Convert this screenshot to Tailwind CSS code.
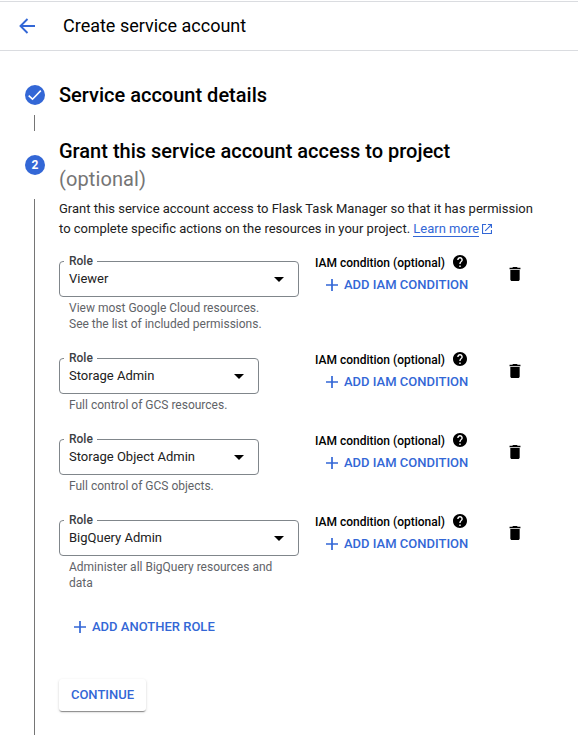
<!DOCTYPE html>
<html lang="en">
<head>
<meta charset="utf-8">
<title>Create service account</title>
<script src="https://cdn.jsdelivr.net/npm/@tailwindcss/browser@4"></script>
</head>
<body class="bg-white font-['Roboto',sans-serif] text-black">
<svg class="hidden">
  <symbol id="plus" viewBox="0 0 12 12"><path d="M6 0v12M0 6h12" stroke="currentColor" stroke-width="1.7" fill="none"/></symbol>
  <symbol id="help" viewBox="2 2 20 20"><path fill="currentColor" d="M12 2C6.48 2 2 6.48 2 12s4.48 10 10 10 10-4.480 10-10S17.520 2 12 2zm1 17h-2v-2h2v2zm2.070-7.750l-.9.920C13.450 12.900 13 13.500 13 15h-2v-.5c0-1.100.45-2.100 1.170-2.830l1.240-1.260c.37-.36.59-.86.59-1.410 0-1.100-.9-2-2-2s-2 .9-2 2H8c0-2.210 1.790-4 4-4s4 1.790 4 4c0 .88-.36 1.680-.93 2.250z"/></symbol>
  <symbol id="trash" viewBox="5 3 14 18"><path fill="currentColor" d="M6 19c0 1.100.9 2 2 2h8c1.100 0 2-.9 2-2V7H6v12zM19 4h-3.500l-1-1h-5l-1 1H5v2h14V4z"/></symbol>
  <symbol id="caret" viewBox="0 0 10 5"><path fill="currentColor" d="M0 0h10L5 5z"/></symbol>
</svg>
<div class="flex h-[739px] w-[578px] flex-col overflow-hidden">
  <header class="mt-px flex h-[50px] shrink-0 items-center border-y border-[#dadce0] pl-[19px]">
    <svg class="h-4 w-4 text-[#3367d6]" viewBox="0 0 16 16" fill="none" stroke="currentColor" stroke-width="1.900"><path d="M16 8H2M8.500 1L1.500 8l7 7"/></svg>
    <h1 class="ml-[28px] text-[18px] leading-6 whitespace-nowrap">Create service account</h1>
  </header>
  <main class="flex grow">
    <div class="ml-[25px] flex w-5 shrink-0 flex-col items-center pt-[34px]">
      <svg class="h-5 w-5 shrink-0" viewBox="0 0 20 20"><circle cx="10" cy="10" r="10" fill="#3367d6"/><path d="M3.700 10.700l3.800 3.500 8.300-8.600" fill="none" stroke="#fff" stroke-width="1.600"/></svg>
      <div class="mt-[10px] mr-px h-4 w-px bg-[#757575]"></div>
      <div class="mt-6 flex h-5 w-5 shrink-0 items-center justify-center rounded-full bg-[#3367d6] text-[12px] font-bold text-white">2</div>
      <div class="mt-6 mr-px h-[536px] w-px shrink-0 bg-[#757575]"></div>
    </div>
    <div class="ml-[14px] flex w-[500px] flex-col pt-[30px]">
      <h2 class="text-[20px] leading-7 font-medium whitespace-nowrap">Service account details</h2>
      <h2 class="mt-7 text-[20px] leading-7 font-medium whitespace-nowrap">Grant this service account access to project<br><span class="font-normal tracking-[0.1px] text-[#757575]">(optional)</span></h2>
      <p class="mt-[6px] text-[13px] leading-5 whitespace-nowrap text-[#212121]">Grant this service account access to Flask Task Manager so that it has permission<br>to complete specific actions on the resources in your project. <a class="inline-block border-b border-[#3367d6] leading-[15px] text-[#3367d6]">Learn more</a><svg class="ml-[3px] inline-block h-[10px] w-[10px] align-[-1px] text-[#3367d6]" viewBox="0 0 11 11" fill="none" stroke="currentColor" stroke-width="1.200"><path d="M4.500.6H.6v9.800h9.800V6.500M6.500.6h3.900v3.900M10.400.6L3.500 7.500"/></svg></p>

      <section class="mt-[22px] flex flex-col">
        <div class="flex h-[97px] items-start">
          <div class="w-[256px] shrink-0">
            <div class="relative flex h-9 w-[240px] items-center justify-between rounded border border-[#80868b] pr-[14px] pl-[9px]">
              <span class="absolute -top-2 left-1 bg-white pr-1 pl-[5px] text-[12px] leading-[14px] font-medium text-[#3c4043]">Role</span>
              <span class="text-[13px] text-[#212121]">Viewer</span><svg class="h-[5px] w-[10px]"><use href="#caret"/></svg>
            </div>
            <p class="mt-[3px] pl-[10px] text-[12px] leading-4 whitespace-nowrap text-[#5f6368]">View most Google Cloud resources.<br>See the list of included permissions.</p>
          </div>
          <div class="-mt-2 w-[192px] shrink-0">
            <div class="flex h-5 items-center gap-2 text-[12px] font-medium whitespace-nowrap">IAM condition (optional)<svg class="mb-[2px] h-[14px] w-[14px]"><use href="#help"/></svg></div>
            <div class="mt-[2px] flex h-5 items-center gap-[6px] pl-[11px] text-[13px] font-medium whitespace-nowrap text-[#3367d6]"><svg class="h-3 w-3"><use href="#plus"/></svg>ADD IAM CONDITION</div>
          </div>
          <svg class="mt-[6px] ml-[2px] h-[14px] w-3"><use href="#trash"/></svg>
        </div>
        <div class="flex h-[81px] items-start">
          <div class="w-[256px] shrink-0">
            <div class="relative flex h-9 w-[200px] items-center justify-between rounded border border-[#80868b] pr-[14px] pl-[9px]">
              <span class="absolute -top-2 left-1 bg-white pr-1 pl-[5px] text-[12px] leading-[14px] font-medium text-[#3c4043]">Role</span>
              <span class="text-[13px] text-[#212121]">Storage Admin</span><svg class="h-[5px] w-[10px]"><use href="#caret"/></svg>
            </div>
            <p class="mt-[3px] pl-[10px] text-[12px] leading-4 whitespace-nowrap text-[#5f6368]">Full control of GCS resources.</p>
          </div>
          <div class="-mt-2 w-[192px] shrink-0">
            <div class="flex h-5 items-center gap-2 text-[12px] font-medium whitespace-nowrap">IAM condition (optional)<svg class="mb-[2px] h-[14px] w-[14px]"><use href="#help"/></svg></div>
            <div class="mt-[2px] flex h-5 items-center gap-[6px] pl-[11px] text-[13px] font-medium whitespace-nowrap text-[#3367d6]"><svg class="h-3 w-3"><use href="#plus"/></svg>ADD IAM CONDITION</div>
          </div>
          <svg class="mt-[6px] ml-[2px] h-[14px] w-3"><use href="#trash"/></svg>
        </div>
        <div class="flex h-[81px] items-start">
          <div class="w-[256px] shrink-0">
            <div class="relative flex h-9 w-[200px] items-center justify-between rounded border border-[#80868b] pr-[14px] pl-[9px]">
              <span class="absolute -top-2 left-1 bg-white pr-1 pl-[5px] text-[12px] leading-[14px] font-medium text-[#3c4043]">Role</span>
              <span class="text-[13px] text-[#212121]">Storage Object Admin</span><svg class="h-[5px] w-[10px]"><use href="#caret"/></svg>
            </div>
            <p class="mt-[3px] pl-[10px] text-[12px] leading-4 whitespace-nowrap text-[#5f6368]">Full control of GCS objects.</p>
          </div>
          <div class="-mt-2 w-[192px] shrink-0">
            <div class="flex h-5 items-center gap-2 text-[12px] font-medium whitespace-nowrap">IAM condition (optional)<svg class="mb-[2px] h-[14px] w-[14px]"><use href="#help"/></svg></div>
            <div class="mt-[2px] flex h-5 items-center gap-[6px] pl-[11px] text-[13px] font-medium whitespace-nowrap text-[#3367d6]"><svg class="h-3 w-3"><use href="#plus"/></svg>ADD IAM CONDITION</div>
          </div>
          <svg class="mt-[6px] ml-[2px] h-[14px] w-3"><use href="#trash"/></svg>
        </div>
        <div class="flex h-[97px] items-start">
          <div class="w-[256px] shrink-0">
            <div class="relative flex h-9 w-[240px] items-center justify-between rounded border border-[#80868b] pr-[14px] pl-[9px]">
              <span class="absolute -top-2 left-1 bg-white pr-1 pl-[5px] text-[12px] leading-[14px] font-medium text-[#3c4043]">Role</span>
              <span class="text-[13px] text-[#212121]">BigQuery Admin</span><svg class="h-[5px] w-[10px]"><use href="#caret"/></svg>
            </div>
            <p class="mt-[3px] pl-[10px] text-[12px] leading-4 whitespace-nowrap text-[#5f6368]">Administer all BigQuery resources and<br>data</p>
          </div>
          <div class="-mt-2 w-[192px] shrink-0">
            <div class="flex h-5 items-center gap-2 text-[12px] font-medium whitespace-nowrap">IAM condition (optional)<svg class="mb-[2px] h-[14px] w-[14px]"><use href="#help"/></svg></div>
            <div class="mt-[2px] flex h-5 items-center gap-[6px] pl-[11px] text-[13px] font-medium whitespace-nowrap text-[#3367d6]"><svg class="h-3 w-3"><use href="#plus"/></svg>ADD IAM CONDITION</div>
          </div>
          <svg class="mt-[6px] ml-[2px] h-[14px] w-3"><use href="#trash"/></svg>
        </div>
      </section>

      <div class="flex h-5 items-center gap-[6px] pl-[15px] text-[13px] font-medium whitespace-nowrap text-[#3367d6]"><svg class="h-3 w-3"><use href="#plus"/></svg>ADD ANOTHER ROLE</div>
      <button class="mt-[42px] h-8 w-[87px] rounded-[3px] bg-white text-[13px] font-medium text-[#3367d6] shadow-[0_2px_1px_-1px_rgba(0,0,0,0.3),0_1px_1px_rgba(0,0,0,0.14),0_1px_3px_rgba(0,0,0,0.15)]">CONTINUE</button>
    </div>
  </main>
</div>
</body>
</html>
